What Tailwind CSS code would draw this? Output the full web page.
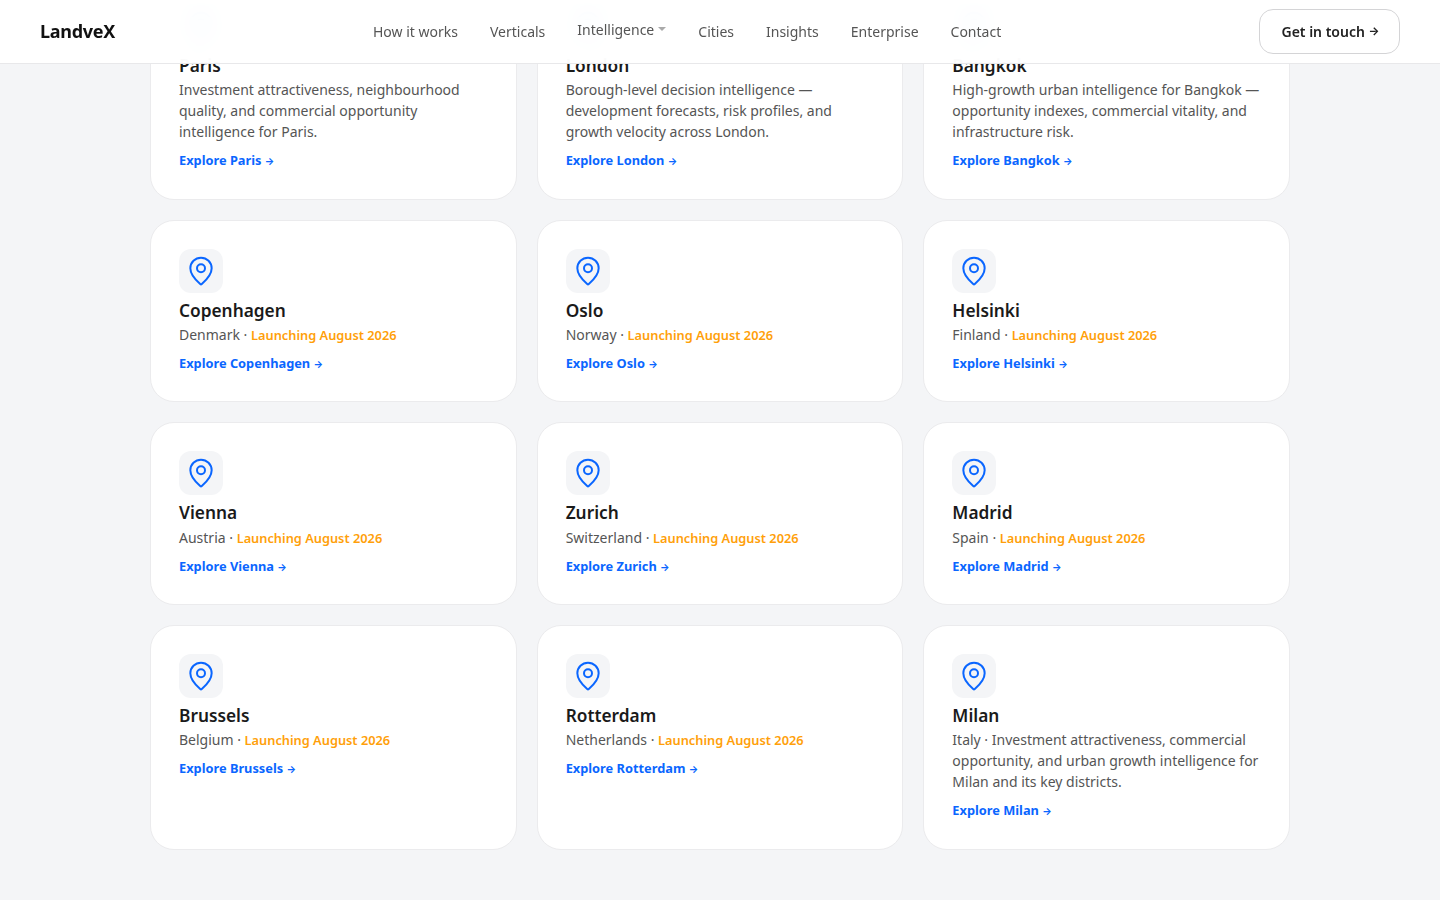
<!DOCTYPE html>
<html lang="en"><head><meta charset="utf-8"><script src="https://cdn.jsdelivr.net/npm/@tailwindcss/browser@4"></script><title>LandveX</title></head>
<body class="h-[900px] overflow-hidden bg-[#f4f5f7] font-['Noto_Sans',sans-serif] relative">
<header class="absolute top-0 left-0 right-0 z-10 h-16 bg-white/95 backdrop-blur-md border-b border-[#e8e8ea] flex items-center justify-between pl-10 pr-10">
<a class="text-[18px] font-bold text-[#111] tracking-[-0.3px]">LandveX</a>
<nav class="absolute left-[373px] top-0 h-[63px] flex items-center gap-8 text-[14px] text-[#555]">
<a>How it works</a><a>Verticals</a><a class="flex items-center gap-1 -mt-1">Intelligence <svg width="8" height="4" viewBox="0 0 8 4" class="mt-[-1px]"><path d="M0 0h8L4 4z" fill="#aaa"/></svg></a><a>Cities</a><a>Insights</a><a>Enterprise</a><a>Contact</a>
</nav>
<a class="ml-auto w-[141px] h-[45px] pl-[2px] flex items-center justify-center rounded-[14px] border border-[#d4d4d6] text-[14px] font-semibold text-[#222] bg-white">Get in touch&nbsp;<span class="font-['Inter'] text-[11.5px] font-bold leading-none">→</span></a>
</header>
<main class="w-[1140px] mx-auto -mt-[25px] grid grid-cols-3 gap-5">
<article class="bg-white border border-[#ebebed] rounded-3xl p-7 pb-[28px]"><div class="w-11 h-11 rounded-xl bg-[#f4f5f7] flex items-center justify-center"><svg width="32" height="32" viewBox="0 0 24 24" fill="none" stroke="#0a66ff" stroke-width="1.5" stroke-linecap="round" stroke-linejoin="round"><path d="M20 10c0 4.993-5.539 10.193-7.399 11.799a1 1 0 0 1-1.202 0C9.539 20.193 4 14.993 4 10a8 8 0 0 1 16 0"/><circle cx="12" cy="10" r="3"/></svg></div><h3 class="mt-[7px] text-[17.3px] leading-[22.5px] font-semibold text-[#1a1a1a]">Paris</h3><p class="mt-[1.8px] text-[14px] leading-[21px] text-[#555]">Investment attractiveness, neighbourhood quality, and commercial opportunity intelligence for Paris.</p><a class="block mt-[8.9px] text-[12.8px] leading-[19.5px] font-bold text-[#0a66ff]">Explore Paris <span class="font-['Inter'] text-[10px] leading-none">→</span></a></article>
<article class="bg-white border border-[#ebebed] rounded-3xl p-7 pb-[28px]"><div class="w-11 h-11 rounded-xl bg-[#f4f5f7] flex items-center justify-center"><svg width="32" height="32" viewBox="0 0 24 24" fill="none" stroke="#0a66ff" stroke-width="1.5" stroke-linecap="round" stroke-linejoin="round"><path d="M20 10c0 4.993-5.539 10.193-7.399 11.799a1 1 0 0 1-1.202 0C9.539 20.193 4 14.993 4 10a8 8 0 0 1 16 0"/><circle cx="12" cy="10" r="3"/></svg></div><h3 class="mt-[7px] text-[17.3px] leading-[22.5px] font-semibold text-[#1a1a1a]">London</h3><p class="mt-[1.8px] text-[14px] leading-[21px] text-[#555]">Borough-level decision intelligence — development forecasts, risk profiles, and growth velocity across London.</p><a class="block mt-[8.9px] text-[12.8px] leading-[19.5px] font-bold text-[#0a66ff]">Explore London <span class="font-['Inter'] text-[10px] leading-none">→</span></a></article>
<article class="bg-white border border-[#ebebed] rounded-3xl p-7 pb-[28px]"><div class="w-11 h-11 rounded-xl bg-[#f4f5f7] flex items-center justify-center"><svg width="32" height="32" viewBox="0 0 24 24" fill="none" stroke="#0a66ff" stroke-width="1.5" stroke-linecap="round" stroke-linejoin="round"><path d="M20 10c0 4.993-5.539 10.193-7.399 11.799a1 1 0 0 1-1.202 0C9.539 20.193 4 14.993 4 10a8 8 0 0 1 16 0"/><circle cx="12" cy="10" r="3"/></svg></div><h3 class="mt-[7px] text-[17.3px] leading-[22.5px] font-semibold text-[#1a1a1a]">Bangkok</h3><p class="mt-[1.8px] text-[14px] leading-[21px] text-[#555]">High-growth urban intelligence for Bangkok — opportunity indexes, commercial vitality, and infrastructure risk.</p><a class="block mt-[8.9px] text-[12.8px] leading-[19.5px] font-bold text-[#0a66ff]">Explore Bangkok <span class="font-['Inter'] text-[10px] leading-none">→</span></a></article>
<article class="bg-white border border-[#ebebed] rounded-3xl p-7 pb-[28px]"><div class="w-11 h-11 rounded-xl bg-[#f4f5f7] flex items-center justify-center"><svg width="32" height="32" viewBox="0 0 24 24" fill="none" stroke="#0a66ff" stroke-width="1.5" stroke-linecap="round" stroke-linejoin="round"><path d="M20 10c0 4.993-5.539 10.193-7.399 11.799a1 1 0 0 1-1.202 0C9.539 20.193 4 14.993 4 10a8 8 0 0 1 16 0"/><circle cx="12" cy="10" r="3"/></svg></div><h3 class="mt-[7px] text-[17.3px] leading-[22.5px] font-semibold text-[#1a1a1a]">Copenhagen</h3><p class="mt-[1.8px] text-[14px] leading-[21px] text-[#555]">Denmark · <span class="text-[12.8px] leading-none font-semibold text-[#ff9f0a]">Launching August 2026</span></p><a class="block mt-[8.9px] text-[12.8px] leading-[19.5px] font-bold text-[#0a66ff]">Explore Copenhagen <span class="font-['Inter'] text-[10px] leading-none">→</span></a></article>
<article class="bg-white border border-[#ebebed] rounded-3xl p-7 pb-[28px]"><div class="w-11 h-11 rounded-xl bg-[#f4f5f7] flex items-center justify-center"><svg width="32" height="32" viewBox="0 0 24 24" fill="none" stroke="#0a66ff" stroke-width="1.5" stroke-linecap="round" stroke-linejoin="round"><path d="M20 10c0 4.993-5.539 10.193-7.399 11.799a1 1 0 0 1-1.202 0C9.539 20.193 4 14.993 4 10a8 8 0 0 1 16 0"/><circle cx="12" cy="10" r="3"/></svg></div><h3 class="mt-[7px] text-[17.3px] leading-[22.5px] font-semibold text-[#1a1a1a]">Oslo</h3><p class="mt-[1.8px] text-[14px] leading-[21px] text-[#555]">Norway · <span class="text-[12.8px] leading-none font-semibold text-[#ff9f0a]">Launching August 2026</span></p><a class="block mt-[8.9px] text-[12.8px] leading-[19.5px] font-bold text-[#0a66ff]">Explore Oslo <span class="font-['Inter'] text-[10px] leading-none">→</span></a></article>
<article class="bg-white border border-[#ebebed] rounded-3xl p-7 pb-[28px]"><div class="w-11 h-11 rounded-xl bg-[#f4f5f7] flex items-center justify-center"><svg width="32" height="32" viewBox="0 0 24 24" fill="none" stroke="#0a66ff" stroke-width="1.5" stroke-linecap="round" stroke-linejoin="round"><path d="M20 10c0 4.993-5.539 10.193-7.399 11.799a1 1 0 0 1-1.202 0C9.539 20.193 4 14.993 4 10a8 8 0 0 1 16 0"/><circle cx="12" cy="10" r="3"/></svg></div><h3 class="mt-[7px] text-[17.3px] leading-[22.5px] font-semibold text-[#1a1a1a]">Helsinki</h3><p class="mt-[1.8px] text-[14px] leading-[21px] text-[#555]">Finland · <span class="text-[12.8px] leading-none font-semibold text-[#ff9f0a]">Launching August 2026</span></p><a class="block mt-[8.9px] text-[12.8px] leading-[19.5px] font-bold text-[#0a66ff]">Explore Helsinki <span class="font-['Inter'] text-[10px] leading-none">→</span></a></article>
<article class="bg-white border border-[#ebebed] rounded-3xl p-7 pb-[28px]"><div class="w-11 h-11 rounded-xl bg-[#f4f5f7] flex items-center justify-center"><svg width="32" height="32" viewBox="0 0 24 24" fill="none" stroke="#0a66ff" stroke-width="1.5" stroke-linecap="round" stroke-linejoin="round"><path d="M20 10c0 4.993-5.539 10.193-7.399 11.799a1 1 0 0 1-1.202 0C9.539 20.193 4 14.993 4 10a8 8 0 0 1 16 0"/><circle cx="12" cy="10" r="3"/></svg></div><h3 class="mt-[7px] text-[17.3px] leading-[22.5px] font-semibold text-[#1a1a1a]">Vienna</h3><p class="mt-[1.8px] text-[14px] leading-[21px] text-[#555]">Austria · <span class="text-[12.8px] leading-none font-semibold text-[#ff9f0a]">Launching August 2026</span></p><a class="block mt-[8.9px] text-[12.8px] leading-[19.5px] font-bold text-[#0a66ff]">Explore Vienna <span class="font-['Inter'] text-[10px] leading-none">→</span></a></article>
<article class="bg-white border border-[#ebebed] rounded-3xl p-7 pb-[28px]"><div class="w-11 h-11 rounded-xl bg-[#f4f5f7] flex items-center justify-center"><svg width="32" height="32" viewBox="0 0 24 24" fill="none" stroke="#0a66ff" stroke-width="1.5" stroke-linecap="round" stroke-linejoin="round"><path d="M20 10c0 4.993-5.539 10.193-7.399 11.799a1 1 0 0 1-1.202 0C9.539 20.193 4 14.993 4 10a8 8 0 0 1 16 0"/><circle cx="12" cy="10" r="3"/></svg></div><h3 class="mt-[7px] text-[17.3px] leading-[22.5px] font-semibold text-[#1a1a1a]">Zurich</h3><p class="mt-[1.8px] text-[14px] leading-[21px] text-[#555]">Switzerland · <span class="text-[12.8px] leading-none font-semibold text-[#ff9f0a]">Launching August 2026</span></p><a class="block mt-[8.9px] text-[12.8px] leading-[19.5px] font-bold text-[#0a66ff]">Explore Zurich <span class="font-['Inter'] text-[10px] leading-none">→</span></a></article>
<article class="bg-white border border-[#ebebed] rounded-3xl p-7 pb-[28px]"><div class="w-11 h-11 rounded-xl bg-[#f4f5f7] flex items-center justify-center"><svg width="32" height="32" viewBox="0 0 24 24" fill="none" stroke="#0a66ff" stroke-width="1.5" stroke-linecap="round" stroke-linejoin="round"><path d="M20 10c0 4.993-5.539 10.193-7.399 11.799a1 1 0 0 1-1.202 0C9.539 20.193 4 14.993 4 10a8 8 0 0 1 16 0"/><circle cx="12" cy="10" r="3"/></svg></div><h3 class="mt-[7px] text-[17.3px] leading-[22.5px] font-semibold text-[#1a1a1a]">Madrid</h3><p class="mt-[1.8px] text-[14px] leading-[21px] text-[#555]">Spain · <span class="text-[12.8px] leading-none font-semibold text-[#ff9f0a]">Launching August 2026</span></p><a class="block mt-[8.9px] text-[12.8px] leading-[19.5px] font-bold text-[#0a66ff]">Explore Madrid <span class="font-['Inter'] text-[10px] leading-none">→</span></a></article>
<article class="bg-white border border-[#ebebed] rounded-3xl p-7 pb-[28px]"><div class="w-11 h-11 rounded-xl bg-[#f4f5f7] flex items-center justify-center"><svg width="32" height="32" viewBox="0 0 24 24" fill="none" stroke="#0a66ff" stroke-width="1.5" stroke-linecap="round" stroke-linejoin="round"><path d="M20 10c0 4.993-5.539 10.193-7.399 11.799a1 1 0 0 1-1.202 0C9.539 20.193 4 14.993 4 10a8 8 0 0 1 16 0"/><circle cx="12" cy="10" r="3"/></svg></div><h3 class="mt-[7px] text-[17.3px] leading-[22.5px] font-semibold text-[#1a1a1a]">Brussels</h3><p class="mt-[1.8px] text-[14px] leading-[21px] text-[#555]">Belgium · <span class="text-[12.8px] leading-none font-semibold text-[#ff9f0a]">Launching August 2026</span></p><a class="block mt-[8.9px] text-[12.8px] leading-[19.5px] font-bold text-[#0a66ff]">Explore Brussels <span class="font-['Inter'] text-[10px] leading-none">→</span></a></article>
<article class="bg-white border border-[#ebebed] rounded-3xl p-7 pb-[28px]"><div class="w-11 h-11 rounded-xl bg-[#f4f5f7] flex items-center justify-center"><svg width="32" height="32" viewBox="0 0 24 24" fill="none" stroke="#0a66ff" stroke-width="1.5" stroke-linecap="round" stroke-linejoin="round"><path d="M20 10c0 4.993-5.539 10.193-7.399 11.799a1 1 0 0 1-1.202 0C9.539 20.193 4 14.993 4 10a8 8 0 0 1 16 0"/><circle cx="12" cy="10" r="3"/></svg></div><h3 class="mt-[7px] text-[17.3px] leading-[22.5px] font-semibold text-[#1a1a1a]">Rotterdam</h3><p class="mt-[1.8px] text-[14px] leading-[21px] text-[#555]">Netherlands · <span class="text-[12.8px] leading-none font-semibold text-[#ff9f0a]">Launching August 2026</span></p><a class="block mt-[8.9px] text-[12.8px] leading-[19.5px] font-bold text-[#0a66ff]">Explore Rotterdam <span class="font-['Inter'] text-[10px] leading-none">→</span></a></article>
<article class="bg-white border border-[#ebebed] rounded-3xl p-7 pb-[28px]"><div class="w-11 h-11 rounded-xl bg-[#f4f5f7] flex items-center justify-center"><svg width="32" height="32" viewBox="0 0 24 24" fill="none" stroke="#0a66ff" stroke-width="1.5" stroke-linecap="round" stroke-linejoin="round"><path d="M20 10c0 4.993-5.539 10.193-7.399 11.799a1 1 0 0 1-1.202 0C9.539 20.193 4 14.993 4 10a8 8 0 0 1 16 0"/><circle cx="12" cy="10" r="3"/></svg></div><h3 class="mt-[7px] text-[17.3px] leading-[22.5px] font-semibold text-[#1a1a1a]">Milan</h3><p class="mt-[1.8px] text-[14px] leading-[21px] text-[#555]">Italy · Investment attractiveness, commercial opportunity, and urban growth intelligence for Milan and its key districts.</p><a class="block mt-[8.9px] text-[12.8px] leading-[19.5px] font-bold text-[#0a66ff]">Explore Milan <span class="font-['Inter'] text-[10px] leading-none">→</span></a></article>
</main>
</body></html>
